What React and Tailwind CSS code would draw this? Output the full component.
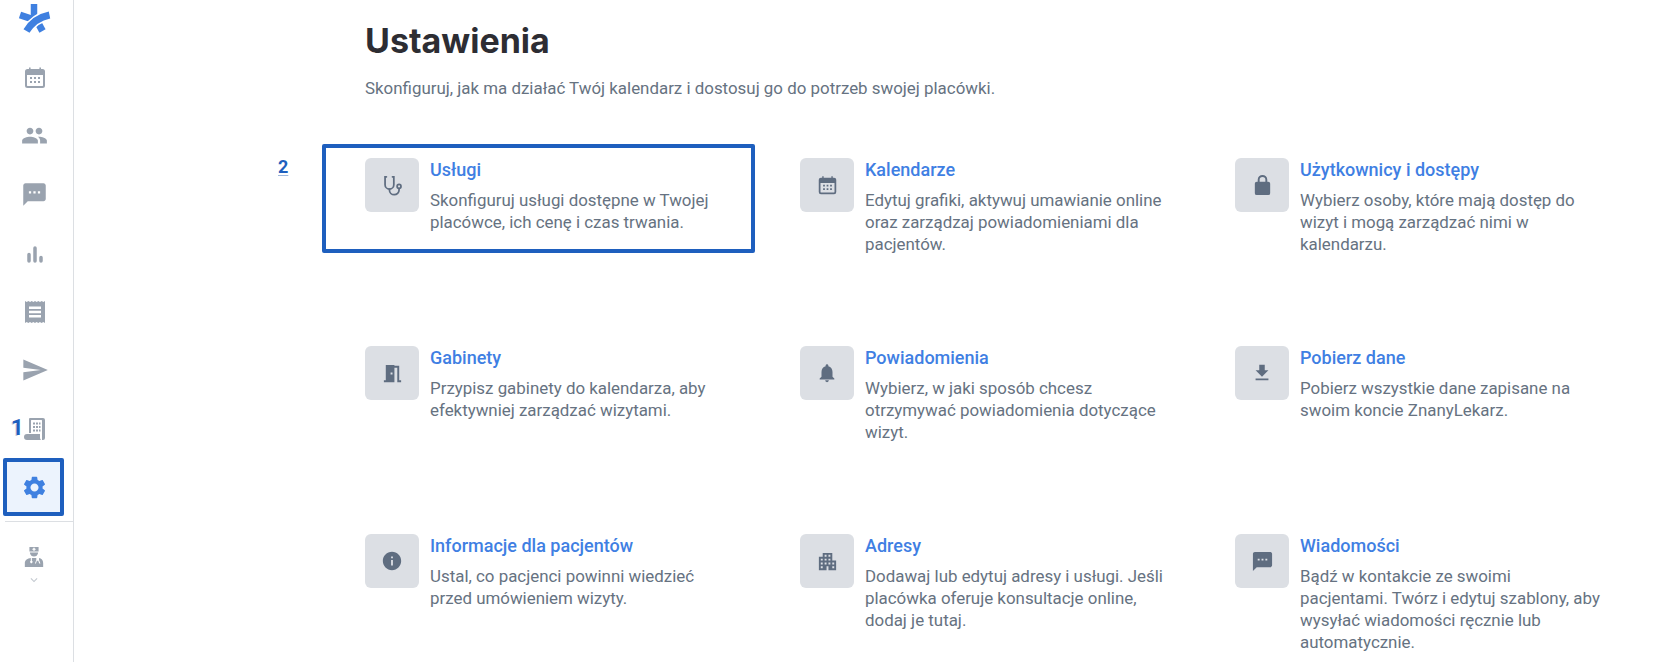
import { MdPeople, MdSms, MdSend, MdSettings, MdFileDownload, MdInfo, MdNotifications, MdMeetingRoom, MdApartment, MdKeyboardArrowDown } from 'react-icons/md';

const CalendarIcon = ({ className }) => (
  <svg className={className} viewBox="0 0 24 24" fill="currentColor">
    <path fillRule="evenodd" d="M6 1.500h1.600V3h8.800V1.500H18V3h1.500A2.500 2.500 0 0 1 22 5.500v14a2.500 2.500 0 0 1-2.500 2.500h-15A2.500 2.500 0 0 1 2 19.500v-14A2.500 2.500 0 0 1 4.500 3H6zM4 9v10.500c0 .3.200.500.500.500h15c.3 0 .500-.2.500-.500V9z" />
    <path d="M7 11h2v2H7zM11 11h2v2h-2zM15 11h2v2h-2zM7 15h2v2H7zM11 15h2v2h-2zM15 15h2v2h-2z" />
  </svg>
);

const BarsIcon = ({ className }) => (
  <svg className={className} viewBox="0 0 24 24" fill="none" stroke="currentColor" strokeWidth="3.500" strokeLinecap="round">
    <path d="M6 12.500v6.500M12 6v13M18 15.500V19" />
  </svg>
);

const ReceiptIcon = ({ className }) => (
  <svg className={className} viewBox="0 0 24 24" fill="currentColor">
    <path fillRule="evenodd" d="M2 1l1.700 1 1.700-1 1.700 1 1.600-1 1.700 1L12 1l1.700 1 1.600-1 1.700 1 1.700-1 1.700 1L22 1v22l-1.700-1-1.700 1-1.700-1-1.600 1-1.700-1L12 23l-1.700-1-1.600 1-1.700-1-1.700 1-1.600-1L2 23zM6 6.500V9h12V6.500zM6 10.800v2.400h12v-2.400zM6 15v2.500h12V15z" />
  </svg>
);

const LedgerIcon = ({ className }) => (
  <svg className={className} viewBox="0 0 24 24" fill="currentColor">
    <path fillRule="evenodd" d="M7 1h13a2 2 0 0 1 2 2v18a2 2 0 0 1-2 2h-1V3.500A.5.5 0 0 0 18.500 3h-10a.5.5 0 0 0-.5.5V16H6V2a1 1 0 0 1 1-1z" />
    <path d="M10 5.500h2v2h-2zM13 5.500h2v2h-2zM16 5.500h1.500v2H16zM10 9h2v2h-2zM13 9h2v2h-2zM16 9h1.500v2H16zM10 12.500h2v2h-2zM13 12.500h2v2h-2zM16 12.500h1.500v2H16z" />
    <path d="M1 20a3 3 0 0 1 3-3h13v3.500c0 1 .5 2 1 2.500H4a3 3 0 0 1-3-3z" />
  </svg>
);

const DoctorIcon = ({ className }) => (
  <svg className={className} viewBox="0 0 24 24" fill="currentColor">
    <path fillRule="evenodd" d="M7 1h10v5H7zM11.200 2v1h-1v1.200h1v1h1.600v-1h1V3h-1V2z" />
    <path d="M7.500 7h9a4.500 4.500 0 0 1-9 0z" />
    <path fillRule="evenodd" d="M2 18.500c0-3.500 3-5 6.500-5.500v3.200a1.300 1.300 0 1 0 1.200 0V13h4.800v2.200L13 19h1.100l1-3h1.600l1 3H19l-1.500-3.800V13.200c2.500.6 4.500 2 4.500 5.300V23H2z" />
  </svg>
);

const StethoscopeIcon = ({ className }) => (
  <svg className={className} viewBox="0 0 24 24" fill="none" stroke="currentColor" strokeWidth="2" strokeLinecap="round">
    <path d="M5 2H3.500v9a5 5 0 0 0 10 0V2H12" />
    <path d="M8.500 16v1a5.500 5.500 0 0 0 11 0v-1.500" />
    <circle cx="19.500" cy="13" r="2.200" />
  </svg>
);

const LockIcon = ({ className }) => (
  <svg className={className} viewBox="0 0 24 24" fill="currentColor">
    <path fillRule="evenodd" d="M12 1a5 5 0 0 0-5 5v2H6a2 2 0 0 0-2 2v10a2 2 0 0 0 2 2h12a2 2 0 0 0 2-2V10a2 2 0 0 0-2-2h-1V6a5 5 0 0 0-5-5zM9 8V6a3 3 0 0 1 6 0v2z" />
  </svg>
);

const Logo = () => (
  <svg className="w-[34px] h-[31px]" viewBox="18 3 34 31" fill="none" stroke="#3f80e0" strokeWidth="7">
    <path d="M34 4v13" strokeWidth="6.500" />
    <path d="M20 15l15 5" />
    <path d="M37 21l5.500 10" />
    <path d="M49.500 15C40 17 32 22 26.500 31" stroke="white" strokeWidth="10" />
    <path d="M49.500 15C40 17 32 22 26.500 31" />
  </svg>
);

const navItems = [
  { Icon: CalendarIcon, size: 'w-[24px] h-[24px]', h: 'h-[59px]' },
  { Icon: MdPeople, size: 'w-[27px] h-[27px]', h: 'h-[57px]' },
  { Icon: MdSms, size: 'w-[27px] h-[27px]', h: 'h-[61px]' },
  { Icon: BarsIcon, size: 'w-[24px] h-[24px]', h: 'h-[57px]' },
  { Icon: ReceiptIcon, size: 'w-[24px] h-[24px]', h: 'h-[59px]' },
  { Icon: MdSend, size: 'w-[28px] h-[28px]', h: 'h-[58px]' },
];

const cards = [
  { Icon: StethoscopeIcon, size: 'w-[21px] h-[21px]', title: 'Usługi', text: 'Skonfiguruj usługi dostępne w Twojej placówce, ich cenę i czas trwania.', marked: true },
  { Icon: CalendarIcon, size: 'w-[21px] h-[21px]', title: 'Kalendarze', text: 'Edytuj grafiki, aktywuj umawianie online oraz zarządzaj powiadomieniami dla pacjentów.' },
  { Icon: LockIcon, size: 'w-[23px] h-[23px]', title: 'Użytkownicy i dostępy', text: 'Wybierz osoby, które mają dostęp do wizyt i mogą zarządzać nimi w kalendarzu.' },
  { Icon: MdMeetingRoom, size: 'w-[23px] h-[23px]', title: 'Gabinety', text: 'Przypisz gabinety do kalendarza, aby efektywniej zarządzać wizytami.' },
  { Icon: MdNotifications, size: 'w-[22px] h-[22px]', title: 'Powiadomienia', text: 'Wybierz, w jaki sposób chcesz otrzymywać powiadomienia dotyczące wizyt.' },
  { Icon: MdFileDownload, size: 'w-[22px] h-[22px]', title: 'Pobierz dane', text: 'Pobierz wszystkie dane zapisane na swoim koncie ZnanyLekarz.' },
  { Icon: MdInfo, size: 'w-[22px] h-[22px]', title: 'Informacje dla pacjentów', text: 'Ustal, co pacjenci powinni wiedzieć przed umówieniem wizyty.' },
  { Icon: MdApartment, size: 'w-[23px] h-[23px]', title: 'Adresy', text: 'Dodawaj lub edytuj adresy i usługi. Jeśli placówka oferuje konsultacje online, dodaj je tutaj.' },
  { Icon: MdSms, size: 'w-[23px] h-[23px]', title: 'Wiadomości', text: 'Bądź w kontakcie ze swoimi pacjentami. Twórz i edytuj szablony, aby wysyłać wiadomości ręcznie lub automatycznie.' },
];

function Card({ Icon, size, title, text, marked }) {
  return (
    <div className="relative flex gap-[11px] h-[188px]">
      {marked && (
        <>
          <div className="absolute left-[-43px] top-[-14px] w-[433px] h-[109px] border-[4px] border-[#1e5fbe] rounded-[2px]" />
          <span className="absolute left-[-87px] top-[-2px] text-[18px] leading-[22px] font-bold text-[#1e5fbe] underline decoration-1 decoration-[#9fb8dc] underline-offset-2">2</span>
        </>
      )}
      <div className="w-[54px] h-[54px] shrink-0 rounded-[6px] bg-[#dcdfe4] flex items-center justify-center text-[#5f6d80]">
        <Icon className={size} />
      </div>
      <div className="w-[300px]">
        <h3 className="text-[18px] leading-[24px] font-medium text-[#3f7fe3]">{title}</h3>
        <p className="mt-[7px] text-[16.9px] leading-[22px] text-[#667281]">{text}</p>
      </div>
    </div>
  );
}

export default function App() {
  return (
    <div className='font-["Roboto",sans-serif] h-[662px] w-full overflow-hidden bg-white flex'>
      <aside className="w-[74px] shrink-0 h-full border-r border-[#dcdfe3] flex flex-col items-stretch">
        <div className="h-[48px] flex items-start pt-[3px] pl-[18px]">
          <Logo />
        </div>
        <nav className="flex flex-col text-[#9aa3af]">
          {navItems.map(({ Icon, size, h }, i) => (
            <div key={i} className={`${h} flex items-center justify-center pr-[4px]`}>
              <Icon className={size} />
            </div>
          ))}
          <div className="relative h-[59px] flex items-center justify-center pr-[4px]">
            <LedgerIcon className="w-[24px] h-[24px]" />
            <span className="absolute left-[11px] top-[17px] text-[22px] leading-[24px] font-bold text-[#1e5fbe] [text-shadow:1px_1px_0_#fff,-1px_1px_0_#c9ced6]">1</span>
          </div>
        </nav>
        <div className="ml-[3px] w-[61px] h-[58px] border-[4px] border-[#1e5fbe] rounded-[2px] bg-[#ecf3fd] flex items-center justify-center">
          <MdSettings className="w-[27px] h-[27px] text-[#3f80e0] ml-[2px]" />
        </div>
        <div className="ml-[5px] mt-[5px] h-px bg-[#dcdfe3]" />
        <div className="flex flex-col items-center pt-[23px] pr-[6px] text-[#9aa3af]">
          <DoctorIcon className="w-[22px] h-[24px]" />
          <MdKeyboardArrowDown className="w-[14px] h-[14px] mt-[4px] text-[#c5cad1]" />
        </div>
      </aside>
      <main className="pl-[291px]">
        <h1 className='pt-[21px] font-["Inter",sans-serif] text-[34px] leading-[40px] font-bold text-[#2d2d33]'>Ustawienia</h1>
        <p className="mt-[15px] text-[16.9px] leading-[24px] text-[#667281]">Skonfiguruj, jak ma działać Twój kalendarz i dostosuj go do potrzeb swojej placówki.</p>
        <div className="mt-[58px] grid grid-cols-[repeat(3,435px)]">
          {cards.map((c) => (
            <Card key={c.title} {...c} />
          ))}
        </div>
      </main>
    </div>
  );
}
